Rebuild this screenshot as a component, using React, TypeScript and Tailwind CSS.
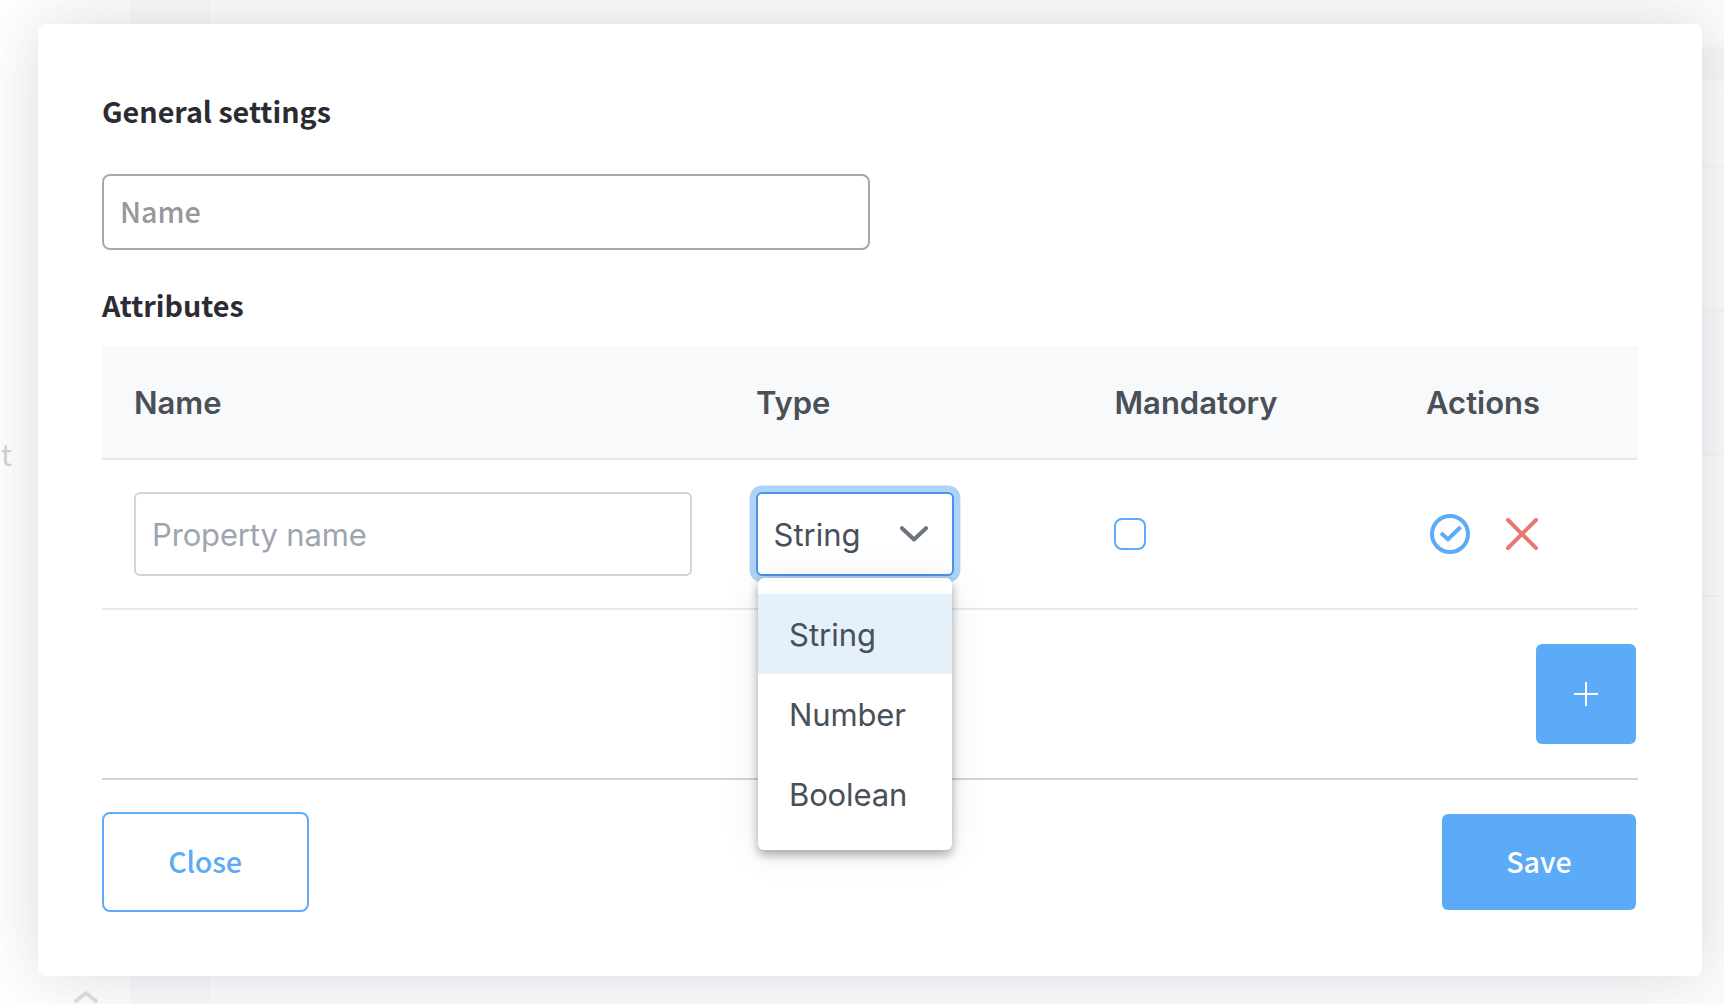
import React from 'react';

const options = ['String', 'Number', 'Boolean'];
const columns = 'grid grid-cols-[622px_358px_312px_auto] pl-8';

function Backdrop() {
  return (
    <div aria-hidden="true" className="absolute inset-0 flex bg-white">
      <div className="flex w-[130px] shrink-0 flex-col justify-between pt-[432px]">
        <span className="pl-px font-['Noto_Sans_CJK_SC',sans-serif] text-[29px] leading-[42px] text-[#d3d3d4]">t</span>
        <svg className="ml-[72px] h-[14px] w-7" viewBox="0 0 28 14" fill="none">
          <path d="M4 11 L14 3 L24 11" stroke="#e0e0e1" strokeWidth="4" strokeLinecap="round" strokeLinejoin="round" />
        </svg>
      </div>
      <div className="w-20 shrink-0 bg-[#fafafa]" />
      <div className="flex flex-1 flex-col bg-[#fdfdfd]">
        <div className="h-[47px]" />
        <div className="h-[34px] bg-[#f8f8f8]" />
        <div className="h-[84px]" />
        <div className="h-1 bg-[#f9f9fb]" />
        <div className="h-[139px]" />
        <div className="h-1 bg-[#f8f8f9]" />
        <div className="h-[140px] bg-[#fbfbfc]" />
        <div className="h-1 bg-[#f9f9fa]" />
        <div className="h-[139px]" />
        <div className="h-[2px] bg-[#f8f8f8]" />
      </div>
    </div>
  );
}

function TypeSelect() {
  return (
    <div className="relative h-[84px] w-[198px]">
      <button className="flex h-full w-full items-start rounded-[6px] border-2 border-[#4a92ea] bg-white pl-[15.5px] pt-[22px] shadow-[0_0_0_6.4px_#aed3f6]">
        <span className="text-[31px] leading-[37px] text-[#495057]">String</span>
        <svg className="ml-auto mr-6 mt-[10px] h-4 w-7" viewBox="0 0 28 16" fill="none">
          <path d="M2 2.2 L14 13.5 L26 2.2" stroke="#6c757d" strokeWidth="4" strokeLinecap="round" strokeLinejoin="round" />
        </svg>
      </button>
      <ul className="absolute left-[2px] top-[86px] z-10 h-[272px] w-[194px] rounded-[6px] bg-white pt-4 shadow-[0_4px_8px_rgba(0,0,0,0.2),0_6px_12px_rgba(0,0,0,0.14),0_2px_40px_rgba(0,0,0,0.08)]">
        {options.map((option, i) => (
          <li
            key={option}
            className={
              i === 0
                ? 'h-20 bg-[#e4f1fb] pl-[31px] pt-[22px] text-[31px] leading-[37px] text-[#495057]'
                : 'h-20 pl-[31px] pt-[22px] text-[31px] leading-[37px] tracking-[-0.13px] text-[#495057]'
            }
          >
            {option}
          </li>
        ))}
      </ul>
    </div>
  );
}

export default function App() {
  return (
    <div className="relative h-[1004px] w-[1724px] overflow-hidden pl-[38px] pt-6">
      <Backdrop />
      <div className="relative h-[952px] w-[1664px] rounded-[8px] bg-white px-16 pt-[66px] font-['Noto_Sans_CJK_SC',sans-serif] shadow-[0_0_64px_rgba(50,65,90,0.19)]">
        <h2 className="text-[28.7px] font-bold leading-[42px] text-[#2b2b33]">General settings</h2>
        <div className="mt-[42px] h-[76px] w-[768px] rounded-[8px] border-2 border-[#a8a8a8] pl-4 pt-[14px] text-[28.7px] font-medium leading-[42px] text-[#97989b]">
          Name
        </div>
        <h2 className="mt-[34px] text-[28.7px] font-bold leading-[42px] text-[#2b2b33]">Attributes</h2>

        <div className="mt-5 w-[1536px] font-[Inter,sans-serif]">
          <div className={`${columns} h-[114px] border-b-2 border-[#e6e9ed] bg-[#f8f9fb] pt-[38px] text-[31px] font-semibold leading-[37px] text-[#495057]`}>
            <span>Name</span>
            <span>Type</span>
            <span className="pl-[0.5px]">Mandatory</span>
            <span>Actions</span>
          </div>
          <div className={`${columns} h-[150px] items-center border-b-2 border-[#e6e9ed]`}>
            <div className="h-[84px] w-[558px] rounded-[6px] border-2 border-[#ced4da] pl-4 pt-[22px] text-[31px] leading-[37px] tracking-[-0.15px] text-[#9ea5b1]">
              Property name
            </div>
            <TypeSelect />
            <div className="size-8 rounded-[8px] border-2 border-[#5cabf8]" />
            <div className="flex items-center gap-9 pl-1">
              <svg className="size-10" viewBox="0 0 40 40" fill="none" stroke="#5cabf8" strokeWidth="4">
                <circle cx="20" cy="20" r="18" />
                <path d="M11 19 L18 25.2 L30.6 13" />
              </svg>
              <svg className="size-8" viewBox="0 0 32 32" fill="none" stroke="#e87872" strokeWidth="4" strokeLinecap="round">
                <path d="M2 2 L30 30 M30 2 L2 30" />
              </svg>
            </div>
          </div>
          <div className="flex h-[170px] items-center justify-end border-b-2 border-[#d1d4db] pr-[2px]">
            <button className="flex size-[100px] items-center justify-center rounded-[6px] bg-[#5cabf8]">
              <svg className="size-6" viewBox="0 0 24 24" stroke="#fff" strokeWidth="2">
                <path d="M12 0 V24 M0 12 H24" />
              </svg>
            </button>
          </div>
        </div>

        <div className="mt-8 flex w-[1536px] items-center justify-between pr-[2px] text-[28.7px] font-medium leading-[42px]">
          <button className="h-[100px] w-[207px] rounded-[8px] border-2 border-[#5cabf8] pb-[2px] pr-px tracking-[-0.2px] text-[#5cabf8]">Close</button>
          <button className="h-24 w-[194px] rounded-[6px] bg-[#5cabf8] pb-[2px] text-white">Save</button>
        </div>
      </div>
    </div>
  );
}
